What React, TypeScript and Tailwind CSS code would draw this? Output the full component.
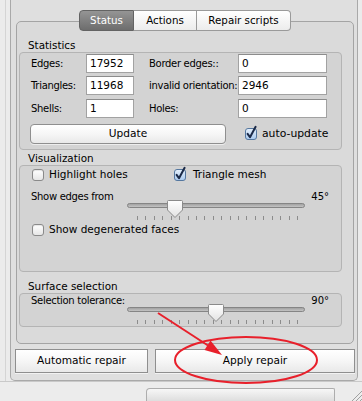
import React from 'react';

const small = 'text-[10px] leading-[19px] tracking-[-0.3px] whitespace-nowrap';

function Checkbox({ on }: { on?: boolean }) {
  if (!on) {
    return (
      <span className="block h-[12px] w-[12px] shrink-0 rounded-[3px] border border-[#8a8a8a] bg-gradient-to-b from-white to-[#e6e6e6] shadow-[inset_0_1px_1px_rgba(0,0,0,0.1)]" />
    );
  }
  return (
    <svg width="12" height="12" viewBox="0 0 12 12" className="block shrink-0 overflow-visible">
      <defs>
        <linearGradient id="chk" x1="0" y1="0" x2="0" y2="1">
          <stop offset="0" stopColor="#e6f0fb" />
          <stop offset="1" stopColor="#a9c9ee" />
        </linearGradient>
      </defs>
      <rect x="0.5" y="0.5" width="11" height="11" rx="2.5" fill="url(#chk)" stroke="#55779f" />
      <path d="M2.6 5.8 L5 9.2 L10.6 -1.2" fill="none" stroke="#1b2a48" strokeWidth="2" strokeLinecap="round" strokeLinejoin="round" />
    </svg>
  );
}

function Slider({ cx, id }: { cx: number; id: string }) {
  const ticks = Array.from({ length: 20 }, (_, i) => Math.round(11 + (i * 160) / 19) + 0.5);
  const t = `M${cx - 7.5},2.5 Q${cx - 7.5},1.5 ${cx - 6.5},1.5 L${cx + 6.5},1.5 Q${cx + 7.5},1.5 ${cx + 7.5},2.5 L${cx + 7.5},11 L${cx},18.5 L${cx - 7.5},11 Z`;
  return (
    <svg width="182" height="22" className="block">
      <defs>
        <linearGradient id={`tr${id}`} x1="0" y1="0" x2="0" y2="1">
          <stop offset="0" stopColor="#9c9c9c" />
          <stop offset="1" stopColor="#c9c9c9" />
        </linearGradient>
        <linearGradient id={`th${id}`} x1="0" y1="0" x2="0" y2="1">
          <stop offset="0" stopColor="#ffffff" />
          <stop offset="1" stopColor="#e2e2e2" />
        </linearGradient>
      </defs>
      <rect x="1.5" y="4.5" width="177" height="4" rx="2" fill={`url(#tr${id})`} stroke="#858585" />
      {ticks.map((x, i) => (
        <line key={i} x1={x} y1="17" x2={x} y2="21" stroke="#8c8c8c" />
      ))}
      <path d={t} fill={`url(#th${id})`} stroke="#8a8a8a" />
    </svg>
  );
}

function Field({ label, value, w, iw }: { label: string; value: string; w: number; iw: number }) {
  return (
    <>
      <span className={`${small} shrink-0 overflow-visible`} style={{ width: w }}>
        {label}
      </span>
      <span
        className="flex h-[19px] shrink-0 items-center border border-[#a2a2a2] border-t-[#8c8c8c] bg-white pl-[3px] text-[10.5px]"
        style={{ width: iw }}
      >
        {value}
      </span>
    </>
  );
}

const groupCls = 'ml-[2px] w-[323px] rounded-[4px] border border-[#b4b4b4] bg-[#d3d3d3]';
const btnCls =
  'flex items-center justify-center border border-[#8f8f8f] bg-gradient-to-b from-white via-[#f6f6f6] to-[#e9e9e9] text-[10.6px] shadow-[0_1px_0_rgba(255,255,255,0.6)]';

export default function App() {
  return (
    <div className="relative h-[401px] w-[362px] overflow-hidden bg-[#ebebeb] font-['DejaVu_Sans',sans-serif] text-black">
      <div className="flex h-[381px]">
        <div className="flex w-[10px] justify-center">
          <div className="w-px bg-[#d4d4d4]" />
        </div>
        <div className="flex w-[348px] flex-col rounded-b-[5px] border-x border-b border-[#a9a9a9] bg-[#dfdfdf] pt-[10px]">
          {/* tabs */}
          <div className="relative z-10 ml-[5px] mr-[3px] flex h-[21px] justify-center text-[10.3px]">
            <div className="flex w-[55px] items-center justify-center rounded-l-[4px] border border-[#636363] bg-gradient-to-b from-[#959595] to-[#6d6d6d] text-white">
              Status
            </div>
            <div className="flex w-[63px] items-center justify-center border-y border-r border-[#9a9a9a] bg-gradient-to-b from-white to-[#ececec]">
              Actions
            </div>
            <div className="flex w-[94px] items-center justify-center rounded-r-[4px] border-y border-r border-[#9a9a9a] bg-gradient-to-b from-white to-[#ececec]">
              Repair scripts
            </div>
          </div>

          <div className="-mt-[10px] ml-[5px] mr-[3px] h-[323px] rounded-[5px] border border-[#a4a4a4] bg-[#dadada] pt-[17px]">
            <div className="ml-[11px] h-[13px] text-[10.4px] leading-[13px]">Statistics</div>
            <div className={`${groupCls} h-[98px] pt-[1px]`}>
              <div className="flex h-[19px] items-center pl-[11px]">
                <Field label="Edges:" value="17952" w={55} iw={48} />
                <span className="w-[15px]" />
                <Field label="Border edges::" value="0" w={89} iw={89} />
              </div>
              <div className="mt-[3px] flex h-[19px] items-center pl-[11px]">
                <Field label="Triangles:" value="11968" w={55} iw={48} />
                <span className="w-[15px]" />
                <Field label="invalid orientation:" value="2946" w={89} iw={89} />
              </div>
              <div className="mt-[4px] flex h-[19px] items-center pl-[11px]">
                <Field label="Shells:" value="1" w={55} iw={48} />
                <span className="w-[15px]" />
                <Field label="Holes:" value="0" w={89} iw={89} />
              </div>
              <div className="mt-[6px] flex h-[20px] items-center">
                <div className={`${btnCls} ml-[10px] h-[20px] w-[196px] rounded-[4px] text-[10.3px]`}>Update</div>
                <span className="ml-[19px]">
                  <Checkbox on />
                </span>
                <span className="ml-[5px] text-[10.8px]">auto-update</span>
              </div>
            </div>

            <div className="ml-[11px] mt-[2px] h-[13px] text-[10.4px] leading-[13px]">Visualization</div>
            <div className={`${groupCls} h-[107px] pt-[2px]`}>
              <div className="flex h-[14px] items-center pl-[12px] text-[10.5px]">
                <div className="flex w-[142px] items-center gap-[5px]">
                  <Checkbox />
                  <span>Highlight holes</span>
                </div>
                <div className="flex items-center gap-[7px]">
                  <Checkbox on />
                  <span>Triangle mesh</span>
                </div>
              </div>
              <div className="mt-[8px] flex h-[12px] items-center justify-between pl-[11px] pr-[12px] text-[10px] tracking-[-0.3px]">
                <span>Show edges from</span>
                <span className="tracking-normal">45°</span>
              </div>
              <div className="-mt-[3px] ml-[106px]">
                <Slider cx={49} id="a" />
              </div>
              <div className="mt-[2px] flex h-[14px] items-center gap-[5px] pl-[12px] text-[10.5px]">
                <Checkbox />
                <span>Show degenerated faces</span>
              </div>
            </div>

            <div className="ml-[11px] mt-[8px] h-[13px] text-[10.4px] leading-[13px]">Surface selection</div>
            <div className={`${groupCls} h-[34px]`}>
              <div className="flex h-[12px] items-center justify-between pl-[11px] pr-[12px] text-[10px] tracking-[-0.3px]">
                <span>Selection tolerance:</span>
                <span className="tracking-normal">90°</span>
              </div>
              <div className="-mt-[3px] ml-[106px]">
                <Slider cx={90} id="b" />
              </div>
            </div>
          </div>

          <div className="ml-[4px] mt-[5px] flex gap-[7px]">
            <div className={`${btnCls} h-[24px] w-[133px]`}>Automatic repair</div>
            <div className={`${btnCls} h-[24px] w-[200px]`}>Apply repair</div>
          </div>
        </div>
        <div className="flex-1" />
      </div>

      {/* bottom strip */}
      <div className="flex h-[20px] items-end border-t border-[#c9c9c9] bg-[#ececec]">
        <div className="ml-[146px] h-[13px] w-[189px] rounded-tl-[4px] rounded-tr-[2px] border-x border-t border-[#adadad] bg-gradient-to-b from-[#f7f7f7] to-[#dedede]" />
        <svg width="13" height="13" className="ml-[14px] block">
          <line x1="3" y1="13" x2="13" y2="3" stroke="#a0a0a0" />
          <line x1="7" y1="13" x2="13" y2="7" stroke="#a0a0a0" />
          <line x1="11" y1="13" x2="13" y2="11" stroke="#a0a0a0" />
        </svg>
      </div>

      {/* red annotation */}
      <svg width="362" height="401" className="pointer-events-none absolute left-0 top-0">
        <ellipse cx="246" cy="360" rx="71" ry="23" fill="none" stroke="#e8202b" strokeWidth="2" />
        <line x1="158" y1="313" x2="208" y2="345.5" stroke="#e8202b" strokeWidth="2" />
        <polygon points="222,355 204.5,350 210.5,340.5" fill="#e8202b" />
      </svg>
    </div>
  );
}
